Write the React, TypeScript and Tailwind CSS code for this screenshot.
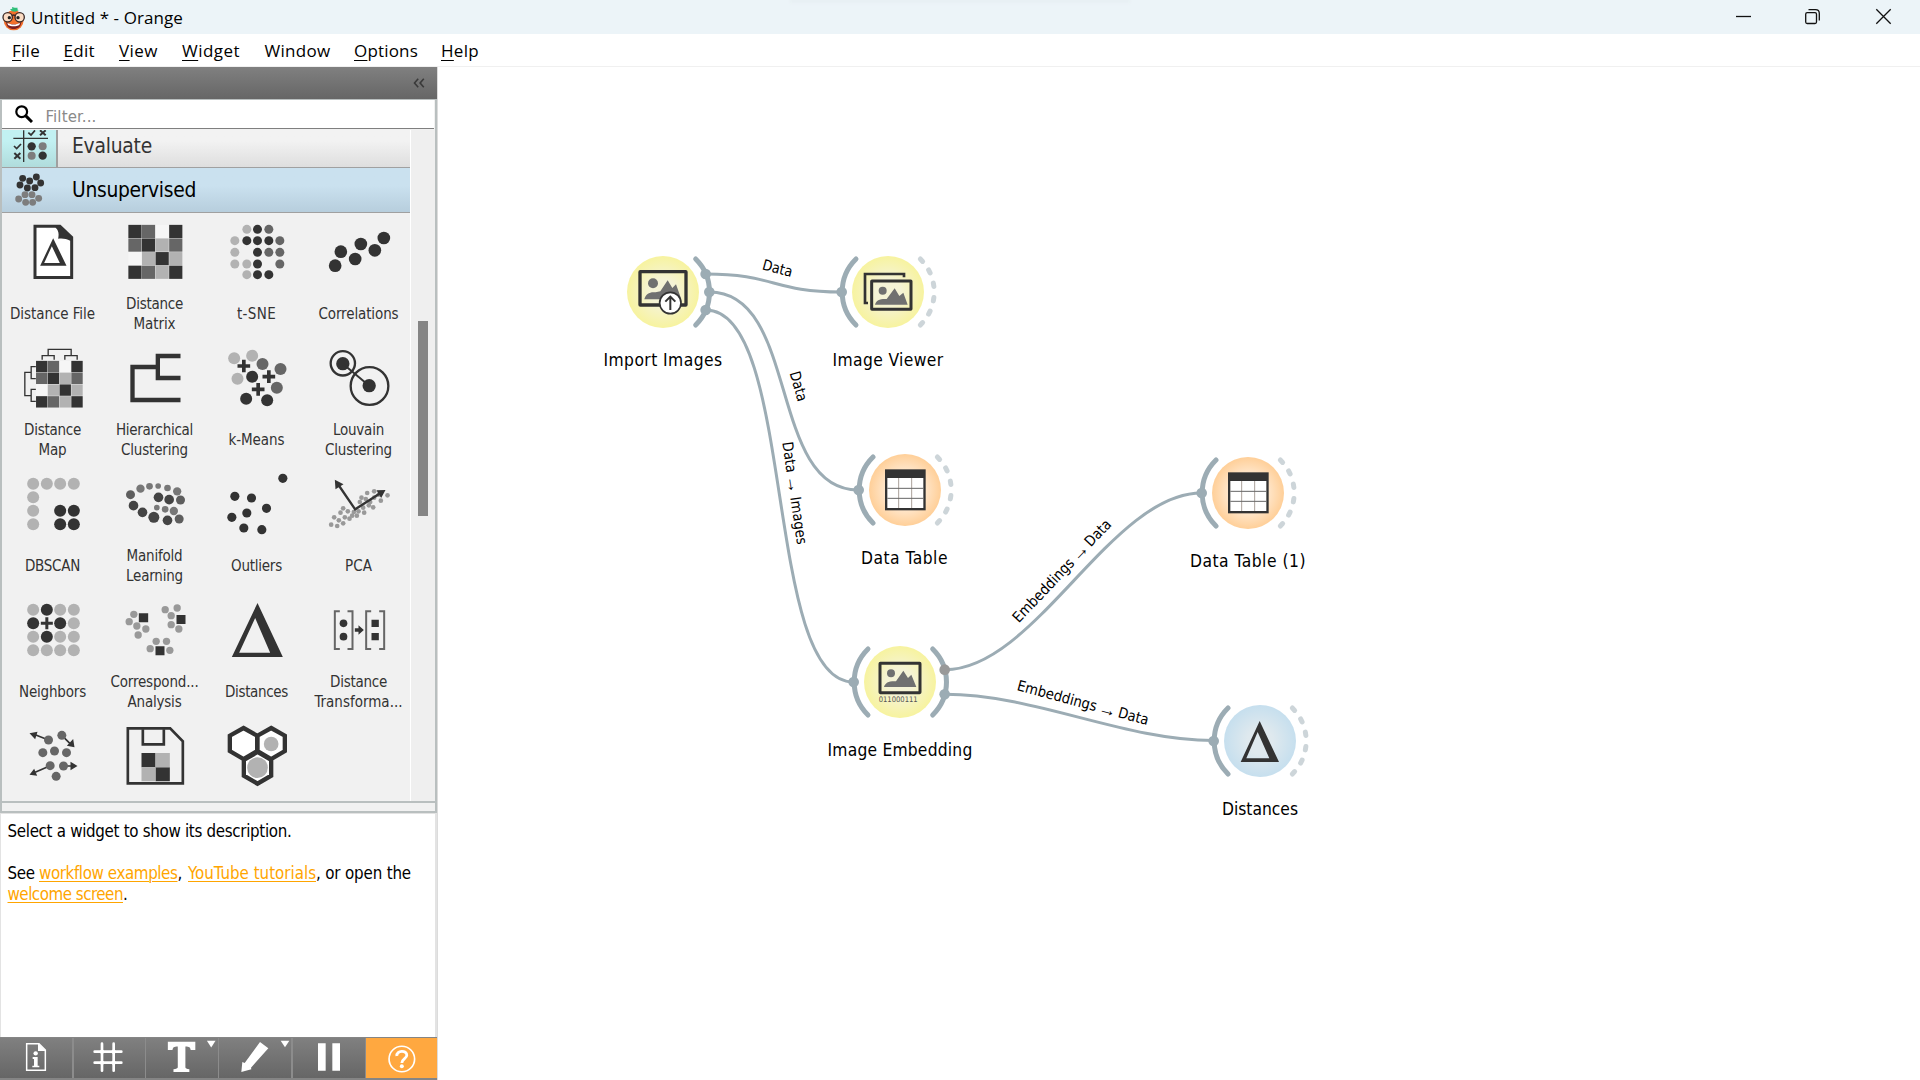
import { useLayoutEffect, useRef, type ReactNode } from "react";

/** Inline text whose tracking is adjusted so that it spans `w` pixels. */
function Fit({ w, children, className = "" }: { w: number; children: string; className?: string }) {
  const ref = useRef<HTMLSpanElement>(null);
  useLayoutEffect(() => {
    const el = ref.current;
    if (!el) return;
    el.style.letterSpacing = "0px";
    el.style.letterSpacing = (w - el.getBoundingClientRect().width) / children.length + "px";
  }, [w, children]);
  return (
    <span ref={ref} className={"whitespace-pre " + className}>
      {children}
    </span>
  );
}

const D = "#333333";
const M = "#666666";
const L = "#b2b2b2";

type Dot = [number, number];
const dots = (pts: Dot[], r: number, fill: string) =>
  pts.map(([x, y]) => <circle key={x + "-" + y} cx={x} cy={y} r={r} fill={fill} />);

function Icon({ box, children }: { box: string; children: ReactNode }) {
  return (
    <svg viewBox={box} className="block size-[60px] overflow-visible">
      {children}
    </svg>
  );
}

const matrix = [
  [D, M, "#f6f6f6", D],
  [M, D, L, M],
  ["#f6f6f6", L, D, L],
  [D, M, L, D],
];
function Matrix({ x, y, s }: { x: number; y: number; s: number }) {
  return (
    <>
      {matrix.map((row, j) =>
        row.map((c, i) => (
          <rect key={i + "-" + j} x={x + i * s + 0.6} y={y + j * s + 0.6} width={s - 1.2} height={s - 1.2} fill={c} />
        )),
      )}
    </>
  );
}

type Widget = { lines: [string, number][]; icon: ReactNode };

const widgets: Widget[] = [
  {
    lines: [["Distance File", 85]],
    icon: (
      <Icon box="67.5 36 180 180">
        <path d="M99 44H180L218 80V207H99Z" fill={D} />
        <path d="M108 53H165C174 60 176 70 173 86C185 84 198 86 209 92V198H108Z" fill="#fff" />
        <path d="M158 85L198 167H119ZM154 109L131 159H178Z" fill={D} fillRule="evenodd" />
      </Icon>
    ),
  },
  { lines: [["Distance", 57], ["Matrix", 42]], icon: <Icon box="373.5 36 180 180"><Matrix x={383} y={44} s={40.8} /></Icon> },
  {
    lines: [["t-SNE", 39]],
    icon: (
      <Icon box="679.5 36 180 180">
        {dots([[739, 58], [703, 92], [703, 127], [703, 162], [739, 162], [739, 194]], 13.5, L)}
        {dots([[805, 58], [838, 92], [805, 127], [838, 127], [838, 162]], 13.5, M)}
        {dots([[771, 58], [739, 92], [771, 92], [805, 92], [771, 127], [771, 162], [771, 194], [805, 194]], 13.5, D)}
      </Icon>
    ),
  },
  {
    lines: [["Correlations", 80]],
    icon: (
      <Icon box="985.5 36 180 180">
        {dots([[1004, 167], [1021, 125], [1064, 147], [1081, 102], [1123, 121], [1150, 84]], 19, D)}
      </Icon>
    ),
  },
  {
    lines: [["Distance", 57], ["Map", 28]],
    icon: (
      <Icon box="67.5 414 180 180">
        <Matrix x={106} y={452} s={35.3} />
        <path
          d="M125 449V437H161V449M193 449V437H230V449M143 437V418H212V437M106 470H92V506H106M106 538H92V574H106M92 487H73V557H92"
          fill="none"
          stroke={D}
          strokeWidth="4"
        />
      </Icon>
    ),
  },
  {
    lines: [["Hierarchical", 77], ["Clustering", 67]],
    icon: (
      <Icon box="373.5 414 180 180">
        <path d="M540 438H472V504H540M472 471H396V570H540" fill="none" stroke={D} strokeWidth="13" />
      </Icon>
    ),
  },
  {
    lines: [["k-Means", 56]],
    icon: (
      <Icon box="679.5 414 180 180">
        {dots([[701, 445], [755, 437], [711, 506]], 18, L)}
        {dots([[786, 462], [840, 477], [829, 533]], 18, M)}
        {dots([[755, 500], [737, 566], [800, 571]], 18, D)}
        <path
          d="M711 468H749M730 449V487M786 500H824M805 481V519M754 538H792M773 519V557"
          stroke={D}
          strokeWidth="11"
        />
      </Icon>
    ),
  },
  {
    lines: [["Louvain", 51], ["Clustering", 67]],
    icon: (
      <Icon box="985.5 414 180 180">
        {dots([[1027, 461], [1106, 527]], 20, D)}
        <path d="M1027 461L1106 527" stroke={D} strokeWidth="6" />
        <circle cx="1027" cy="460" r="36.5" fill="none" stroke={D} strokeWidth="7" />
        <circle cx="1107" cy="528" r="56.5" fill="none" stroke={D} strokeWidth="7" />
      </Icon>
    ),
  },
  {
    lines: [["DBSCAN", 55]],
    icon: (
      <Icon box="67.5 42 180 180">
        {dots([[98, 71], [139, 71], [179, 71], [220, 71], [98, 112], [98, 152], [98, 193]], 18, L)}
        {dots([[179, 152], [220, 152], [179, 193], [220, 193]], 18, D)}
      </Icon>
    ),
  },
  {
    lines: [["Manifold", 56], ["Learning", 57]],
    icon: (
      <Icon box="373.5 42 180 180">
        {dots([[473, 78], [469, 143]], 8.5, "#7a7a7a")}
        {dots([[447, 79], [501, 84], [494, 148]], 10, "#777")}
        {dots([[420, 86], [530, 94], [520, 153]], 12.5, "#777")}
        {dots([[390, 104], [540, 120], [536, 177]], 13.5, "#5e5e5e")}
        {dots([[399, 137], [426, 157], [501, 181], [506, 119], [474, 112]], 14.5, "#444")}
        {dots([[460, 172]], 16.5, "#444")}
      </Icon>
    ),
  },
  {
    lines: [["Outliers", 51]],
    icon: (
      <Icon box="679.5 42 180 180">
        {dots([[847, 55], [703, 109], [753, 114], [798, 145], [739, 159], [694, 172], [730, 204], [784, 209]], 13.7, D)}
      </Icon>
    ),
  },
  {
    lines: [["PCA", 27]],
    icon: (
      <Icon box="985.5 42 180 180">
        {dots(
          [
            [992, 194], [1010, 198], [1028, 190], [1001, 172], [1015, 181], [1033, 172], [1020, 158], [1028, 145],
            [1042, 154], [1047, 176], [1055, 167], [1069, 167], [1074, 154], [1091, 158], [1078, 126], [1083, 113],
            [1100, 99], [1121, 94], [1096, 117], [1109, 126], [1118, 142], [1141, 122], [1161, 106], [1105, 136],
            [1121, 113], [1060, 156], [1088, 143], [1135, 104],
          ],
          7,
          "#999",
        )}
        <path d="M1012 72L1064 148L1145 96" fill="none" stroke={D} strokeWidth="7" />
        <path d="M1003 59L1029 73L1005 88ZM1155 90L1128 91L1142 114Z" fill={D} />
      </Icon>
    ),
  },
  {
    lines: [["Neighbors", 67]],
    icon: (
      <Icon box="67.5 420 180 180">
        {dots(
          [
            [98, 449], [179, 449], [220, 449], [220, 490], [98, 530], [179, 530], [220, 530], [98, 571], [139, 571],
            [179, 571], [220, 571],
          ],
          18,
          L,
        )}
        {dots([[139, 449], [98, 490], [179, 490], [139, 530]], 18, D)}
        <path d="M121 490H157M139 472V508" stroke={D} strokeWidth="9" />
      </Icon>
    ),
  },
  {
    lines: [["Correspond...", 88], ["Analysis", 54]],
    icon: (
      <Icon box="373.5 420 180 180">
        {dots(
          [
            [400, 463], [386, 485], [409, 498], [436, 507], [413, 525], [494, 449], [530, 444], [512, 467], [512, 494],
            [535, 507], [467, 544], [498, 544], [449, 566], [508, 571],
          ],
          11,
          "#999",
        )}
        <path d="M415 460h28v27h-28zM528 465h27v27h-27zM465 559h27v27h-27z" fill={D} />
      </Icon>
    ),
  },
  {
    lines: [["Distances", 63]],
    icon: (
      <Icon box="679.5 420 180 180">
        <path d="M771 429L847 591H694ZM764 474L716 578H809Z" fill={D} fillRule="evenodd" />
      </Icon>
    ),
  },
  {
    lines: [["Distance", 57], ["Transforma...", 88]],
    icon: (
      <Icon box="985.5 420 180 180">
        <path
          d="M1018 454H1003V567H1018M1041 454H1056V567H1041M1112 454H1097V567H1112M1136 454H1151V567H1136"
          fill="none"
          stroke={M}
          strokeWidth="6"
        />
        {dots([[1029, 490], [1029, 530]], 11.5, D)}
        <path d="M1113 479h22v22h-22zM1113 519h22v22h-22zM1063 505h11v-9l16 14l-16 14v-9h-11z" fill={D} />
      </Icon>
    ),
  },
  {
    lines: [],
    icon: (
      <Icon box="67.5 78 180 180">
        <path d="M144 120L104 104M184 106L208 130M149 197L104 217M189 198H214" stroke={D} strokeWidth="5" />
        <path
          d="M87 100L111 95L104 118ZM222 142L199 137L218 117ZM87 224L101 206L110 227ZM231 198L210 185V211Z"
          fill={D}
        />
        {dots([[144, 120], [184, 106], [127, 158], [162, 153], [198, 158], [149, 197], [189, 198], [167, 229]], 13.5, M)}
      </Icon>
    ),
  },
  {
    lines: [],
    icon: (
      <Icon box="373.5 78 180 180">
        <path d="M382 85H509L547 124V250H382Z" fill="none" stroke={D} strokeWidth="8" />
        <path d="M427 88V133H490V88" fill="none" stroke={D} strokeWidth="8" />
        <path d="M423 159h42v43h-42zM465 202h43v42h-43z" fill={D} />
        <path d="M465 159h43v43h-43zM423 202h42v42h-42z" fill={L} />
      </Icon>
    ),
  },
  {
    lines: [],
    icon: (
      <Icon box="679.5 78 180 180">
        <path
          d="M729 84L770 107V153L729 177L688 153V107ZM812 84L853 107V153L812 177L771 153V107ZM771 156L812 180V227L771 251L730 227V180Z"
          fill="#fff"
          stroke={D}
          strokeWidth="13"
        />
        <circle cx="812" cy="132" r="22" fill={L} />
        <circle cx="771" cy="203" r="31" fill={L} />
      </Icon>
    ),
  },
];

/* ---------- Workflow canvas ---------- */

const LINK = "#9cacb4";

const links = [
  { from: [706, 274], to: [841.3, 292] },
  { from: [709.5, 292], to: [858, 490] },
  { from: [706, 310], to: [853.3, 682] },
  { from: [945, 669.7], to: [1201.3, 493] },
  { from: [945, 694.3], to: [1213.3, 740.5] },
];

type LinkLabel = { x: number; y: number; a: number; parts: [string, number, number][] };

// Each part is [text, start offset, width] measured along the label's own axis.
const linkLabels: LinkLabel[] = [
  { x: 777.3, y: 268.3, a: 15, parts: [["Data", -15, 30.5]] },
  { x: 798.5, y: 386, a: 74, parts: [["Data", -15, 30.5]] },
  { x: 794.7, y: 493.3, a: 81.7, parts: [["Data", -52, 31], ["→", -18, 18], ["Images", 3.5, 48]] },
  { x: 1061.7, y: 571, a: -46.5, parts: [["Embeddings", -67.5, 82], ["→", 17, 18], ["Data", 37, 31]] },
  { x: 1082.7, y: 702.7, a: 15, parts: [["Embeddings", -67.5, 82], ["→", 17, 18], ["Data", 37, 31]] },
];

function linkPath([x1, y1]: number[], [x2, y2]: number[]) {
  const k = Math.min(Math.hypot(x2 - x1, y2 - y1) / 2, 90);
  return `M${x1} ${y1}C${x1 + k} ${y1} ${x2 - k} ${y2} ${x2} ${y2}`;
}

const Landscape = ({ d, cx, cy, r }: { d: string; cx: number; cy: number; r: number }) => (
  <>
    <circle cx={cx} cy={cy} r={r} fill="#707070" />
    <path d={d} fill="#707070" />
  </>
);

const table = (
  <>
    <rect x="-60" y="-62" width="122" height="123" fill={D} />
    <rect x="-53" y="-36" width="108" height="90" fill="#fff" />
    <path d="M-19 -36V54M20 -36V54" stroke="#aaa09a" strokeWidth="3" />
    <path d="M-53 -5H55M-53 25H55" stroke="#666" strokeWidth="3" />
  </>
);

type Node = {
  label: string;
  w: number;
  pos: string;
  tone: "yellow" | "orange" | "blue";
  input: boolean;
  outputs: [number, number, string][];
  icon: ReactNode;
};

const nodes: Node[] = [
  {
    label: "Import Images",
    w: 119,
    pos: "left-[175px] top-[175px]",
    tone: "yellow",
    input: false,
    outputs: [[128, -54, LINK], [139, 0, LINK], [128, 54, LINK]],
    icon: (
      <>
        <rect x="-69" y="-61" width="138" height="100" rx="1" fill="none" stroke={D} strokeWidth="10" />
        <Landscape cx={-30} cy={-26} r={15} d="M-56 22C-52 6 -40 -1 -22 1L-8 -2L14 -35L28 -12L39 -23L55 22Z" />
        <circle cx="22" cy="33" r="32" fill="#fff" stroke={D} strokeWidth="5" />
        <path d="M22 54V15M7 29L22 14L37 29" fill="none" stroke={D} strokeWidth="6" />
      </>
    ),
  },
  {
    label: "Image Viewer",
    w: 111,
    pos: "left-[400px] top-[175px]",
    tone: "yellow",
    input: true,
    outputs: [],
    icon: (
      <>
        <path d="M-60 33H-69V-54H48V-44" fill="none" stroke={D} strokeWidth="8" />
        <rect x="-49" y="-33" width="118" height="85" rx="1" fill="none" stroke={D} strokeWidth="9" />
        <Landscape cx={-16} cy={-4} r={12} d="M-39 38C-35 24 -24 20 -4 21L20 -11L34 12L46 2L59 38Z" />
      </>
    ),
  },
  { label: "Data Table", w: 87, pos: "left-[416.5px] top-[373px]", tone: "orange", input: true, outputs: [], icon: table },
  { label: "Data Table (1)", w: 116, pos: "left-[760px] top-[376px]", tone: "orange", input: true, outputs: [], icon: table },
  {
    label: "Image Embedding",
    w: 145,
    pos: "left-[412px] top-[565px]",
    tone: "yellow",
    input: true,
    outputs: [[134, -37, "#999999"], [134, 37, LINK]],
    icon: (
      <>
        <rect x="-60" y="-56" width="120" height="88" rx="1" fill="none" stroke={D} strokeWidth="9" />
        <Landscape cx={-27} cy={-26} r={12} d="M-48 15C-44 2 -34 -3 -12 -2L10 -34L24 -12L34 -22L49 15Z" />
        <text
          x="-64"
          y="59"
          textLength="117"
          lengthAdjust="spacingAndGlyphs"
          fontSize="23"
          fill="#555"
          className="font-['DejaVu_Sans',sans-serif] [font-stretch:normal]"
        >
          011000111
        </text>
      </>
    ),
  },
  {
    label: "Distances",
    w: 76,
    pos: "left-[772px] top-[623.5px]",
    tone: "blue",
    input: true,
    outputs: [],
    icon: <path d="M-1 -60L57 63H-58ZM-7 -27L-41 52H28Z" fill={D} fillRule="evenodd" />,
  },
];

const tones = {
  yellow: ["#f5f3d6", "#f7f39f"],
  orange: ["#fff0e0", "#ffcf98"],
  blue: ["#dfe9ee", "#c6dfee"],
};

function WorkflowNode({ node }: { node: Node }) {
  const [inner, outer] = tones[node.tone];
  const id = "g-" + node.label.replace(/\W/g, "");
  return (
    <div className={"absolute flex w-[100px] flex-col items-center " + node.pos}>
      <svg viewBox="-150 -150 300 300" className="block size-[100px] overflow-visible">
        <defs>
          <radialGradient id={id}>
            <stop offset="0" stopColor={inner} />
            <stop offset="0.35" stopColor={inner} />
            <stop offset="1" stopColor={outer} />
          </radialGradient>
        </defs>
        <circle r="108" fill={`url(#${id})`} />
        {node.icon}
        {node.input && (
          <>
            <path d="M-96 -99A139 139 0 0 0 -96 99" fill="none" stroke={LINK} strokeWidth="15" strokeLinecap="round" />
            <circle cx="-139" r="16" fill={LINK} />
          </>
        )}
        {node.outputs.length > 0 ? (
          <>
            <path d="M98 -99A139 139 0 0 1 98 99" fill="none" stroke={LINK} strokeWidth="15" strokeLinecap="round" />
            {node.outputs.map(([x, y, c]) => (
              <circle key={y} cx={x} cy={y} r="16" fill={c} />
            ))}
          </>
        ) : (
          [-43.5, -26.4, -9, 9, 26.4, 43.5].map((a) => (
            <path
              key={a}
              d="M138.5 -5V5"
              transform={`rotate(${a})`}
              stroke="#cdd5d9"
              strokeWidth="15"
              strokeLinecap="round"
            />
          ))
        )}
      </svg>
      <Fit w={node.w} className="mt-[8px] text-[17.3px] leading-5 text-black">
        {node.label}
      </Fit>
    </div>
  );
}

/* ---------- Window chrome ---------- */

const menu: [string, string, number, string][] = [
  ["F", "ile", 28, "ml-[12px]"],
  ["E", "dit", 31.5, "ml-[23.5px]"],
  ["V", "iew", 39, "ml-[24px]"],
  ["W", "idget", 58, "ml-[24px]"],
  ["", "Window", 66, "ml-[24.5px]"],
  ["O", "ptions", 64, "ml-[23.5px]"],
  ["H", "elp", 38, "ml-[23px]"],
];

function MenuItem({ item }: { item: [string, string, number, string] }) {
  const [key, rest, w, margin] = item;
  const ref = useRef<HTMLSpanElement>(null);
  useLayoutEffect(() => {
    const el = ref.current;
    if (!el) return;
    el.style.letterSpacing = "0px";
    el.style.letterSpacing = (w - el.getBoundingClientRect().width) / (key.length + rest.length) + "px";
  }, [key, rest, w]);
  return (
    <span ref={ref} className={margin}>
      {key && <span className="underline decoration-1 underline-offset-[3px]">{key}</span>}
      {rest}
    </span>
  );
}

function Logo() {
  return (
    <svg viewBox="0 0 75 90" className="ml-[1px] block h-[30px] w-[25px]">
      <ellipse cx="38" cy="55" rx="30" ry="30" fill="#f4702b" />
      <path d="M27 22l7-2-1-5 8 2 9 0-1 5 4 3-10 4-10-1z" fill="#2fbf7a" />
      <path d="M15 60C24 69 52 69 61 60C60 75 50 81 38 81C26 81 17 75 15 60Z" fill="#7c1f22" />
      <path d="M19 62C30 69 46 69 57 62L55 69C46 74 30 74 21 69Z" fill="#fff" />
      <circle cx="20" cy="46" r="14" fill="#fbdcc4" stroke="#3b2a26" strokeWidth="4" />
      <circle cx="56" cy="46" r="14" fill="#fbdcc4" stroke="#3b2a26" strokeWidth="4" />
      <circle cx="25" cy="47" r="5" fill="#222" />
      <circle cx="51" cy="47" r="5" fill="#222" />
      <path d="M33 41Q38 37 43 41" fill="none" stroke="#3b2a26" strokeWidth="4" />
    </svg>
  );
}

function EvaluateIcon() {
  return (
    <svg viewBox="6 390 162 111" className="block h-[37px] w-[54px]">
      <path d="M40 415H144M71 391V486" stroke={D} strokeWidth="4" />
      <path d="M85 398L93 405L105 391M42 438L50 446L63 432" fill="none" stroke={D} strokeWidth="5" />
      <path d="M120 391L137 406M137 391L120 406M43 459L61 476M61 459L43 476" stroke={D} strokeWidth="6" />
      {dots([[95, 439], [128, 467]], 12.5, D)}
      {dots([[128, 439], [95, 467]], 12, "#7d7d7d")}
    </svg>
  );
}

function UnsupervisedIcon() {
  return (
    <svg viewBox="6 504 162 132" className="block h-[44px] w-[54px]">
      {dots([[68, 535], [109, 531], [89, 543], [60, 555], [122, 549], [82, 564], [105, 563]], 10.3, D)}
      {dots([[75, 584], [96, 584], [56, 597], [116, 595], [77, 607], [98, 607]], 10.3, "#7d7d7d")}
    </svg>
  );
}

const tool = "flex h-full shrink-0 items-center justify-center bg-linear-to-b from-[#808080] to-[#666666]";

function Toolbar() {
  return (
    <div className="flex h-[43px] w-[437px] gap-[1.5px] border-t border-b-2 border-[#858585] bg-[#8c8c8c]">
      <div className={tool + " w-[72px]"}>
        <svg viewBox="0 54 216 120" className="h-10 w-[72px]">
          <path d="M80 71H117L136 90V151H80Z" fill="none" stroke="#fff" strokeWidth="4.5" />
          <path d="M114 70V93H137Z" fill="#fff" />
          <circle cx="107" cy="100" r="6.5" fill="#fff" />
          <path d="M98 111H113V137H118V142H97V137H102V117H98Z" fill="#fff" />
        </svg>
      </div>
      <div className={tool + " w-[71px]"}>
        <svg viewBox="222 54 213 120" className="h-10 w-[71px]">
          <path d="M306 71V152M341 71V152M284 95H364M284 128H364" stroke="#fff" strokeWidth="8" strokeLinecap="round" />
          <path
            d="M306 86l9 9l-9 9l-9-9zM341 86l9 9l-9 9l-9-9zM306 119l9 9l-9 9l-9-9zM341 119l9 9l-9 9l-9-9z"
            fill="#fff"
          />
        </svg>
      </div>
      <div className={tool + " w-[71.5px]"}>
        <svg viewBox="439 54 216 120" className="h-10 w-[72px]">
          <path
            d="M505 65H588V90H574C573 82 570 79 558 79V142C558 146 562 147 570 148V156H522V148C530 147 535 146 535 142V79C523 79 520 82 519 90H505Z"
            fill="#fff"
          />
          <path d="M623 62H649L636 82Z" fill="#fff" />
        </svg>
      </div>
      <div className={tool + " w-[72px]"}>
        <svg viewBox="657 54 216 120" className="h-10 w-[72px]">
          <path d="M780 66L805 85L753 143L754 148L724 156L727 126L734 129Z" fill="#fff" />
          <path d="M842 62H868L855 82Z" fill="#fff" />
        </svg>
      </div>
      <div className={tool + " w-[72px]"}>
        <svg viewBox="879 54 216 120" className="h-10 w-[72px]">
          <path d="M954 70h23v82h-23zM997 70h23v82h-23z" fill="#fff" />
        </svg>
      </div>
      <div className="-ml-[0.5px] flex h-full flex-1 items-center justify-center bg-[#ffa840]">
        <svg viewBox="1098 54 214 120" className="h-10 w-[71px]">
          <circle cx="1206" cy="117" r="38.5" fill="none" stroke="#fff" strokeWidth="5" />
          <path
            d="M1191 108C1189 90 1222 89 1221 106C1221 116 1206 116 1206 129"
            fill="none"
            stroke="#fff"
            strokeWidth="8.5"
          />
          <circle cx="1206" cy="139" r="6" fill="#fff" />
        </svg>
      </div>
    </div>
  );
}

const ui = "font-['DejaVu_Sans_Condensed','DejaVu_Sans',sans-serif] [font-stretch:condensed]";
const segoe = "font-['Open_Sans',sans-serif] [font-stretch:normal]";
const link = "text-[#ffa500] underline decoration-1 underline-offset-2";

export default function App() {
  return (
    <div className={"flex h-[1080px] w-[1920px] flex-col overflow-hidden bg-white " + ui}>
      <header className={"relative flex h-[34px] shrink-0 items-center bg-[#ecf4f8] text-black " + segoe}>
        <div className="absolute top-0 left-[790px] h-1 w-[340px] bg-linear-to-b from-[#e4edf0] to-[#ecf4f8] blur-[1px]" />
        <Logo />
        <Fit w={152} className="mt-px ml-[5px] text-[17px]">
          Untitled * - Orange
        </Fit>
        <svg viewBox="0 0 220 34" className="ml-auto h-[34px] w-[220px]" fill="none" stroke="#111" strokeWidth="1.3">
          <path d="M36 16.5H51" />
          <rect x="105.7" y="12.7" width="10.8" height="10.8" rx="1.5" />
          <path d="M108.5 9.7H115.5Q119.3 9.7 119.3 13.5V20.5" />
          <path d="M176.3 9.3L190.7 23.7M190.7 9.3L176.3 23.7" />
        </svg>
      </header>

      <nav className={"flex h-[33px] shrink-0 items-center border-b border-[#f0f0f0] pt-px text-[17px] text-black " + segoe}>
        {menu.map((m) => (
          <MenuItem key={m[1]} item={m} />
        ))}
      </nav>

      <div className="flex min-h-0 flex-1">
        <aside className="flex w-[438px] shrink-0 flex-col border-r border-[#dcdcdc]">
          <div className="flex h-8 shrink-0 items-center justify-end bg-linear-to-b from-[#808080] to-[#666666] pr-3">
            <svg viewBox="0 0 12 10" className="h-[10px] w-3" fill="none" stroke="#3a3a3a" strokeWidth="1.6">
              <path d="M5.2 0.8L1.5 5L5.2 9.2M10.8 0.8L7.1 5L10.8 9.2" />
            </svg>
          </div>

          <div className="flex h-[704px] shrink-0 flex-col border-t border-r-2 border-b-2 border-l-2 border-[#b9bfbf] bg-[#f1f1f1]">
            <div className="mr-px flex h-[29px] shrink-0 items-center border-b border-[#7f7f7f] bg-white pl-[13px]">
              <svg viewBox="0 0 18 18" className="size-[18px]" fill="none" stroke="#000">
                <circle cx="6.7" cy="6.7" r="5.4" strokeWidth="2.2" />
                <path d="M10.6 10.6L17 17" strokeWidth="3" />
              </svg>
              <Fit w={51} className="mt-[4px] ml-[12.5px] text-[16.7px] leading-5 text-[#8a8a8a]">
                Filter...
              </Fit>
            </div>

            <div className="mt-px flex min-h-0 flex-1">
              <div className="w-[408px] shrink-0 overflow-hidden">
                <div className="flex h-[38px] items-center border-b border-[#a0a0a0] bg-linear-to-b from-[#f2f2f2] from-30% to-[#dedede]">
                  <div className="h-[37px] w-[56px] border-r-2 border-[#a0a0a0] bg-linear-to-b from-[#c2f1f2] from-30% to-[#b0dcdc]">
                    <EvaluateIcon />
                  </div>
                  <Fit w={80} className="-mt-[4px] ml-[14px] text-[20.8px] text-[#333]">
                    Evaluate
                  </Fit>
                </div>
                <div className="flex h-[45px] items-center border-b border-[#a0a0a0] bg-linear-to-b from-[#cae1ef] from-40% to-[#b7cedd]">
                  <UnsupervisedIcon />
                  <Fit w={124} className="mt-[2px] ml-[16px] text-[20.8px] text-black">
                    Unsupervised
                  </Fit>
                </div>
                <div className="-ml-[0.5px] grid w-[408px] grid-cols-4">
                  {widgets.map((w, i) => (
                    <div key={i} className="flex h-[126px] flex-col items-center pt-[9px]">
                      {w.icon}
                      <div className="mt-[8px] flex h-[47px] flex-col items-center justify-center text-[15px] leading-5 text-[#333]">
                        {w.lines.map(([t, width]) => (
                          <Fit key={t} w={width}>
                            {t}
                          </Fit>
                        ))}
                      </div>
                    </div>
                  ))}
                </div>
              </div>
              <div className="flex-1 border-l border-white bg-[#efefef]">
                <div className="mt-[191px] ml-[7px] h-[195px] w-[10px] bg-[#858585]" />
              </div>
            </div>
          </div>

          <div className="h-[10px] shrink-0 border-x-2 border-b-2 border-[#b9bfbf] bg-[#f1f1f1]" />

          <div className="flex-1 border-t border-r-2 border-l border-[#e3e3e3] bg-white pt-[7px] pl-[6.5px] text-[16.8px] leading-[21px] text-black">
            <p className="h-[42px]">
              <Fit w={284}>Select a widget to show its description.</Fit>
            </p>
            <p className="whitespace-nowrap">
              <Fit w={31.5}>See </Fit>
              <Fit w={138.5} className={link}>workflow examples</Fit>
              <Fit w={10.5}>, </Fit>
              <Fit w={128} className={link}>YouTube tutorials</Fit>
              <Fit w={95}>, or open the</Fit>
              <br />
              <Fit w={115.5} className={link}>welcome screen</Fit>.
            </p>
          </div>

          <Toolbar />
        </aside>

        <main className="relative flex-1">
          <svg viewBox="438 67 1482 1013" className="block h-[1013px] w-[1482px]">
            {links.map((l, i) => (
              <path key={i} d={linkPath(l.from, l.to)} fill="none" stroke={LINK} strokeWidth="3" />
            ))}
            {linkLabels.map((l, i) => (
              <text key={i} transform={`translate(${l.x} ${l.y}) rotate(${l.a})`} fontSize="14.8" fill="#000">
                {l.parts.map(([t, x, w]) =>
                  t === "→" ? (
                    <tspan key={t} x={x} y="6" fontSize={w} className="font-['Liberation_Sans',sans-serif]">
                      {t}
                    </tspan>
                  ) : (
                    <tspan key={t} x={x} y="5" textLength={w} lengthAdjust="spacingAndGlyphs">
                      {t}
                    </tspan>
                  ),
                )}
              </text>
            ))}
          </svg>
          {nodes.map((n) => (
            <WorkflowNode key={n.label} node={n} />
          ))}
        </main>
      </div>
    </div>
  );
}
